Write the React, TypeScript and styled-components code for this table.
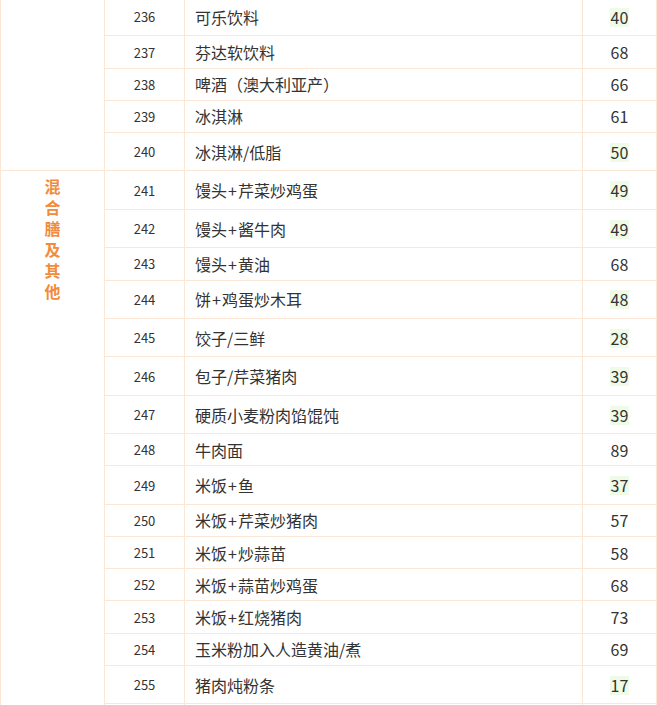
import React from "react";
import styled, { createGlobalStyle } from "styled-components";

const Global = createGlobalStyle`
  html, body { margin: 0; padding: 0; background: #fff; }
  body { font-family: "Noto Sans CJK SC", "Microsoft YaHei", sans-serif; color: #333; }
`;

const Page = styled.div`
  width: 657px;
  overflow: hidden;
`;

const Table = styled.table`
  width: 656px;
  margin-top: -3px;
  border-collapse: collapse;
  table-layout: fixed;
`;

const Col = styled.col<{ $w: number }>`
  width: ${(p) => p.$w}px;
`;

const Row = styled.tr<{ $tall: boolean }>`
  height: ${(p) => (p.$tall ? 38.45 : 32.2)}px;
`;

const Cell = styled.td`
  border: 1px solid #fce6d6;
  padding: 0;
  vertical-align: middle;
`;

const CategoryCell = styled(Cell)`
  vertical-align: top;
  text-align: center;
  padding-top: 5px;
`;

const CategoryText = styled.div`
  display: inline-block;
  width: 16px;
  color: #f28c3c;
  font-weight: bold;
  font-size: 16px;
  line-height: 21px;
  word-break: break-all;
`;

const NoCell = styled(Cell)`
  text-align: center;
  font-size: 13px;
  color: #333;
`;

const NameCell = styled(Cell)`
  padding-left: 10px;
  font-size: 16px;
  color: #333;
`;

const Plus = styled.span`
  padding: 0 1px;
`;

const ValueCell = styled(Cell)`
  text-align: center;
  font-size: 16px;
  color: #333;
`;

const Highlight = styled.span<{ $on: boolean }>`
  display: inline-block;
  line-height: 19px;
  padding: 0 1px;
  background: ${(p) => (p.$on ? "#effbe7" : "transparent")};
`;

type Item = { no: number; name: string; value: number; hi: boolean };

const items: Item[] = [
  { no: 236, name: "可乐饮料", value: 40, hi: true },
  { no: 237, name: "芬达软饮料", value: 68, hi: false },
  { no: 238, name: "啤酒（澳大利亚产）", value: 66, hi: false },
  { no: 239, name: "冰淇淋", value: 61, hi: false },
  { no: 240, name: "冰淇淋/低脂", value: 50, hi: true },
  { no: 241, name: "馒头+芹菜炒鸡蛋", value: 49, hi: true },
  { no: 242, name: "馒头+酱牛肉", value: 49, hi: true },
  { no: 243, name: "馒头+黄油", value: 68, hi: false },
  { no: 244, name: "饼+鸡蛋炒木耳", value: 48, hi: true },
  { no: 245, name: "饺子/三鲜", value: 28, hi: true },
  { no: 246, name: "包子/芹菜猪肉", value: 39, hi: true },
  { no: 247, name: "硬质小麦粉肉馅馄饨", value: 39, hi: true },
  { no: 248, name: "牛肉面", value: 89, hi: false },
  { no: 249, name: "米饭+鱼", value: 37, hi: true },
  { no: 250, name: "米饭+芹菜炒猪肉", value: 57, hi: false },
  { no: 251, name: "米饭+炒蒜苗", value: 58, hi: false },
  { no: 252, name: "米饭+蒜苗炒鸡蛋", value: 68, hi: false },
  { no: 253, name: "米饭+红烧猪肉", value: 73, hi: false },
  { no: 254, name: "玉米粉加入人造黄油/煮", value: 69, hi: false },
  { no: 255, name: "猪肉炖粉条", value: 17, hi: true },
  { no: 256, name: "", value: 0, hi: false },
];

const category = "混合膳及其他";

function renderName(name: string) {
  const parts = name.split("+");
  return parts.map((p, i) => (
    <React.Fragment key={i}>
      {i > 0 && <Plus>+</Plus>}
      {p}
    </React.Fragment>
  ));
}

export default function App() {
  return (
    <Page>
      <Global />
      <Table>
        <colgroup>
          <Col $w={104} />
          <Col $w={80} />
          <Col $w={398} />
          <Col $w={74} />
        </colgroup>
        <tbody>
          {items.map((it, i) => (
            <Row key={it.no} $tall={it.hi}>
              {i === 0 && <Cell rowSpan={5} />}
              {i === 5 && (
                <CategoryCell rowSpan={items.length - 5}>
                  <CategoryText>{category}</CategoryText>
                </CategoryCell>
              )}
              <NoCell>{it.name ? it.no : ""}</NoCell>
              <NameCell>{renderName(it.name)}</NameCell>
              <ValueCell>
                {it.name ? <Highlight $on={it.hi}>{it.value}</Highlight> : null}
              </ValueCell>
            </Row>
          ))}
        </tbody>
      </Table>
    </Page>
  );
}
